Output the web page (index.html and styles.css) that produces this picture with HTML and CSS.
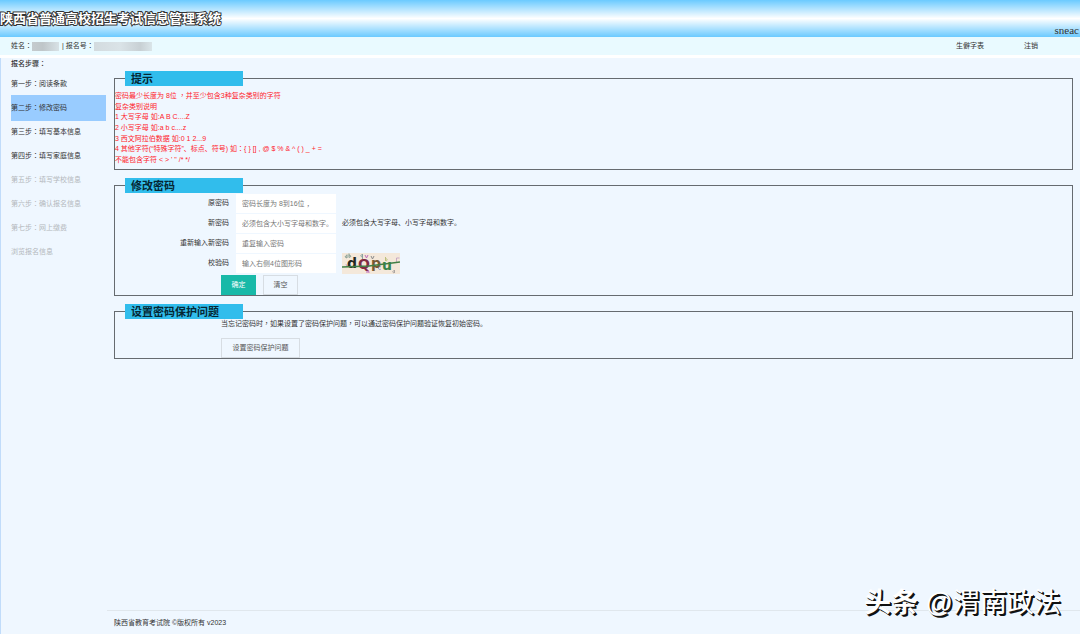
FILE: index.html
```html
<!DOCTYPE html>
<html lang="zh-CN">
<head>
<meta charset="utf-8">
<title>陕西省普通高校招生考试信息管理系统</title>
<link rel="stylesheet" href="styles.css">
</head>
<body>
<header class="banner">
  <h1 class="banner-title">陕西省普通高校招生考试信息管理系统</h1>
  <span class="banner-org">sneac</span>
</header>
<div class="userbar">
  <div class="user">
    <span>姓名<i>：</i></span><span class="mask mask-name"></span><span class="sep">|</span><span>报名号<i>：</i></span><span class="mask mask-number"></span>
  </div>
  <nav class="links"><a href="#">生僻字表</a><a href="#">注销</a></nav>
</div>
<div class="layout">
  <aside class="sidebar">
    <h2 class="steps-title">报名步骤<i>：</i></h2>
    <ul class="steps">
      <li><a class="step" href="#">第一步<i>：</i>阅读条款</a></li>
      <li><a class="step active" href="#">第二步<i>：</i>修改密码</a></li>
      <li><a class="step" href="#">第三步<i>：</i>填写基本信息</a></li>
      <li><a class="step" href="#">第四步<i>：</i>填写家庭信息</a></li>
      <li><a class="step disabled">第五步<i>：</i>填写学校信息</a></li>
      <li><a class="step disabled">第六步<i>：</i>确认报名信息</a></li>
      <li><a class="step disabled">第七步<i>：</i>网上缴费</a></li>
      <li><a class="step disabled">浏览报名信息</a></li>
    </ul>
  </aside>
  <div class="column">
    <main class="main">
      <fieldset class="panel">
        <legend>提示</legend>
        <div class="tips">
          <p>密码最少长度为 8位 <i>，</i>并至少包含3种复杂类别的字符</p>
          <p>复杂类别说明</p>
          <p>1 大写字母 如:A B C....Z</p>
          <p>2 小写字母 如:a b c....z</p>
          <p>3 西文阿拉伯数据 如:0 1 2...9</p>
          <p>4 其他字符(“特殊字符”、标点、符号) 如<i>：</i>{ } [] , @ $ % &amp; ^ ( ) _ + =</p>
          <p>不能包含字符 &lt; &gt; ' " /* */</p>
        </div>
      </fieldset>
      <fieldset class="panel">
        <legend>修改密码</legend>
        <form>
          <div class="row"><label for="old">原密码</label><input id="old" type="password" placeholder="密码长度为 8到16位 ，"></div>
          <div class="row"><label for="new">新密码</label><input id="new" type="password" placeholder="必须包含大小写字母和数字。"><span>必须包含大写字母、小写字母和数字。</span></div>
          <div class="row"><label for="again">重新输入新密码</label><input id="again" type="password" placeholder="重复输入密码"></div>
          <div class="row"><label for="code">校验码</label><input id="code" type="text" placeholder="输入右侧4位图形码">
            <svg class="captcha" viewBox="0 0 58 21" role="img" aria-label="校验码图形">
              <rect width="58" height="21" fill="#f4e8da"/>
              <g fill="none">
                <path stroke="#7f9b91" d="M5 1.500v3.500M5 3a1 1 0 1 0 0 1.500M7 .5v4M7 2.500a1 1 0 1 1 0 1.500"/>
                <path stroke="#8ca2a0" d="M20.500 1v5M20.500 2a1 1 0 1 0 0 1.500"/>
                <path stroke="#bd6dba" d="M23 2l1.500 3 1.500-3M25 16v4m0-2q2-2 2 2"/>
                <path stroke="#8b8b8b" d="M29 3l1.500 3 1.500-3"/>
                <path stroke="#bdc17d" d="M43.500 4v4m0-2a1 1 0 1 1 0 1.500"/>
                <path stroke="#c9a9c4" d="M54.500 9v-4h3M4 11l1 3 1-2 1 2 1-3"/>
                <path stroke="#aaa4a1" d="M52.500 17v3m0-2a1 1 0 1 0 0 1.500"/>
                <path stroke="#8eaad0" d="M39 14a1.500 1.500 0 1 0 0 2"/>
              </g>
              <g class="letters">
                <text x="5" y="15" fill="#252820">d</text><text x="16" y="16" fill="#812d43">Q</text><text x="29" y="15" fill="#765934">p</text><text x="40" y="17" fill="#37834b">u</text>
              </g>
              <path d="M0 14 L27 13 L58 9" fill="none" stroke="#417f45" stroke-width="1.500"/>
            </svg>
          </div>
          <div class="actions"><button class="btn primary" type="submit">确定</button><button class="btn" type="reset">清空</button></div>
        </form>
      </fieldset>
      <fieldset class="panel">
        <legend>设置密码保护问题</legend>
        <div class="protect">
          <p>当忘记密码时<i>，</i>如果设置了密码保护问题<i>，</i>可以通过密码保护问题验证恢复初始密码。</p>
          <button class="btn" type="button">设置密码保护问题</button>
        </div>
      </fieldset>
    </main>
    <footer class="footer">陕西省教育考试院 ©版权所有 v2023</footer>
  </div>
</div>
<div class="watermark"><b>头条</b> @渭南政法</div>
</body>
</html>
```
FILE: styles.css
```css
* { box-sizing: border-box; }
body {
  margin: 0;
  min-height: 100vh;
  display: flex;
  flex-direction: column;
  background: #eff7ff;
  color: #333;
  font: 7px/10px "Liberation Sans", "Noto Sans CJK SC", sans-serif;
}
h1, h2, p, ul { margin: 0; padding: 0; }
ul { list-style: none; }
a { color: inherit; text-decoration: none; }
/* Punctuation centred in its em box */
i {
  font-family: "Noto Sans CJK TC", sans-serif;
  font-style: normal;
  line-height: 1;
  -webkit-locale: "zh-TW";
}

.banner {
  height: 37px;
  display: flex;
  justify-content: space-between;
  align-items: flex-end;
  background: linear-gradient(#6bcaff, #fff 50%, #6bcaff);
}
.banner-title {
  padding-bottom: 8px;
  font-size: 13px;
  line-height: 20px;
  color: #fff;
  -webkit-text-stroke: 2px #333;
  paint-order: stroke fill;
}
.banner-org { padding-right: 1px; font: 11px/14px "Liberation Serif", serif; }

.userbar {
  display: flex;
  justify-content: space-between;
  align-items: center;
  padding: 0 42px 0 11px;
  height: 21px;
  background: #e9faff;
  border-bottom: 3px solid #fff;
}
.user { display: flex; align-items: center; }
.mask { height: 9px; background: linear-gradient(90deg, #c5cbce, #bfc6c9 40%, #d8e2e6); }
.mask-name { width: 27px; }
.mask-number { width: 58px; background: linear-gradient(90deg, #d3dbdf, #dae3e7 45%, #c8d0d4 80%, #dae5e9); }
.sep { padding: 0 2px 0 3px; }
.links { display: flex; gap: 40px; }

.layout { flex: 1; display: flex; border-left: 1px solid #c1dcfa; }
.sidebar { width: 106px; flex: none; padding: 1px 1px 0 10px; }
.steps-title { font-size: 7px; line-height: 10px; font-weight: 500; padding-bottom: 3px; }
.step { display: block; line-height: 24px; }
.step.active { margin: -1px 0; line-height: 26px; background: #9cf; }
.step.disabled { color: #b4b8bc; }

.column { flex: 1; display: flex; flex-direction: column; }
.main { flex: 1; display: flex; flex-direction: column; gap: 8px; padding: 13px 7px 0; }
.panel { margin: 0; padding: 0; border: 1px solid #666b70; min-width: 0; }
.panel legend {
  width: 118px;
  margin-left: 10px;
  padding: 1px 6px 0;
  background: #31bdec;
  color: #052733;
  font-size: 11px;
  line-height: 14px;
  font-weight: 700;
}
.tips {
  display: flex;
  flex-direction: column;
  justify-content: space-between;
  min-height: 83px;
  padding: 5px 0 4px;
  color: #ff1a2a;
}

.row { display: flex; align-items: center; height: 20px; }
.row label { width: 114px; margin-right: 7px; text-align: right; }
.row input {
  width: 100px;
  height: 19px;
  margin-right: 6px;
  padding: 0 6px;
  border: 0;
  background: #fff;
  color: #333;
  font: inherit;
}
.row input::placeholder { color: #777; }
.captcha { width: 58px; height: 21px; }
.letters { font: 14px "DejaVu Sans", sans-serif; stroke: currentColor; stroke-width: 0; font-weight: bold; }
.actions { display: flex; gap: 7px; padding: 2px 0 0 106px; }
.btn {
  min-width: 35px;
  height: 20px;
  padding: 0 9px;
  border: 1px solid #d7dde3;
  background: transparent;
  color: #555;
  font: inherit;
}
.btn.primary { border-color: #18b9a8; background: #18b9a8; color: #fff; }
.protect { padding-left: 106px; }
.protect p { margin-bottom: 9px; }
.protect .btn { display: block; min-width: 79px; }

.footer { padding: 7px 7px 6px; border-top: 1px solid #e0e7ed; }

.watermark {
  position: absolute;
  right: 19px;
  bottom: 13px;
  font: 27px/36px "Liberation Sans", "Noto Sans CJK SC", sans-serif;
  color: #fff;
  text-shadow: 1px 1px #111, 2px 2px #111;
}
```
